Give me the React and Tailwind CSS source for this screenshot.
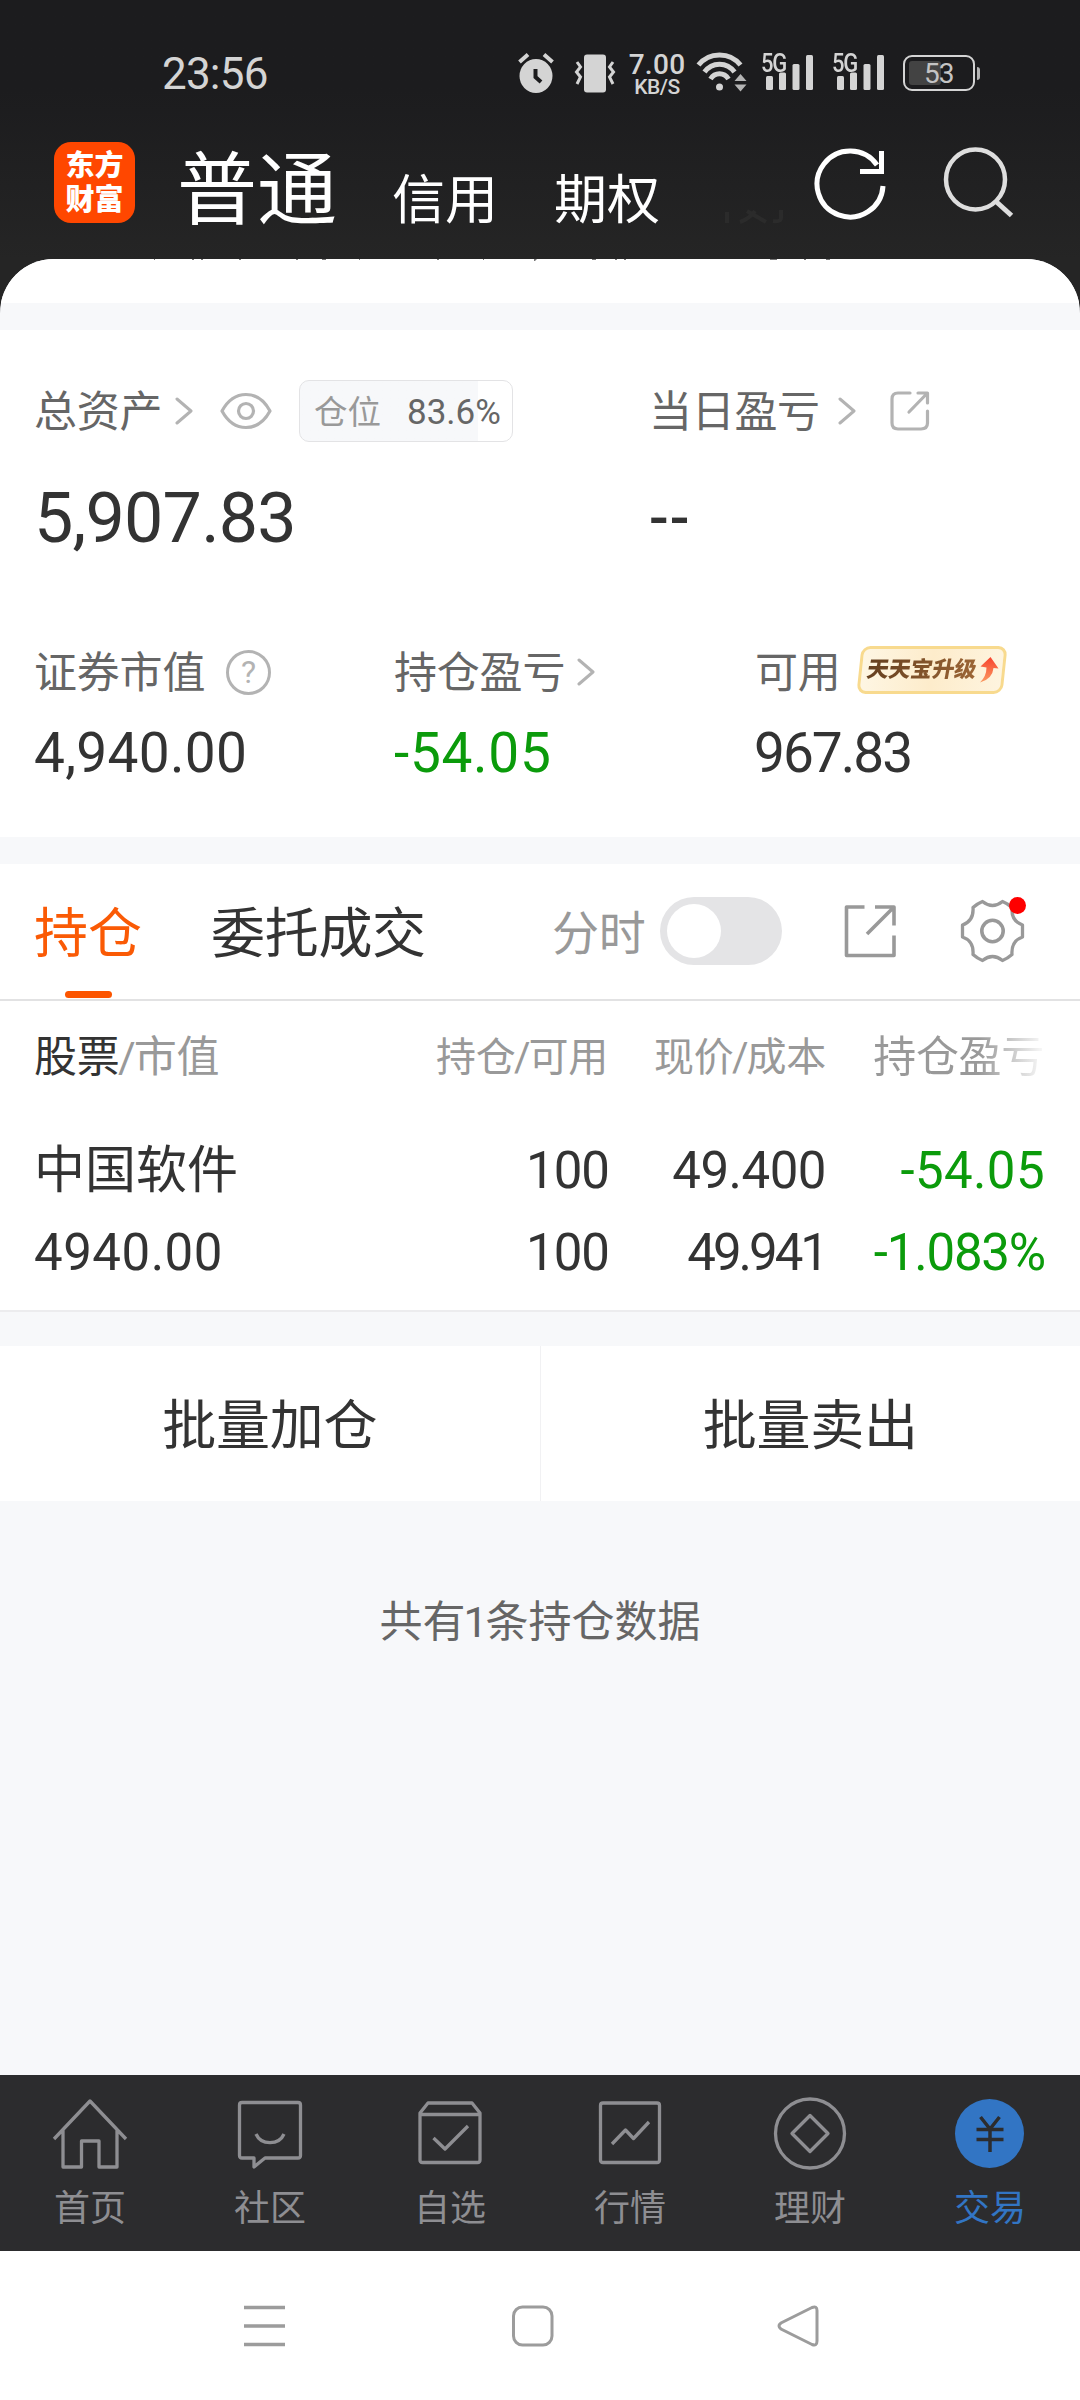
import React from "react";

const Chevron = ({ className = "" }) => (
  <svg className={`h-[28px] w-[18px] shrink-0 ${className}`} viewBox="0 0 18 28" fill="none" stroke="#b3b3b3" strokeWidth="3" strokeLinecap="round" strokeLinejoin="round">
    <path d="M2 2 L16 14 L2 26" />
  </svg>
);

const Signal = ({ className = "" }) => (
  <div className={`relative h-[40px] w-[54px] shrink-0 ${className}`}>
    <span className="absolute left-0 top-[1px] text-[25px] font-medium leading-[21px] tracking-[-1.500px] [transform:scaleX(0.88)] origin-left">5G</span>
    <svg className="absolute inset-0" width="54" height="40" viewBox="0 0 54 40" fill="#d4d4d4">
      <rect x="5" y="24" width="7" height="14" rx="1.5" />
      <rect x="18" y="20.500" width="7" height="17.500" rx="1.5" />
      <rect x="31.500" y="12" width="7" height="26" rx="1.5" />
      <rect x="45" y="3" width="7" height="35" rx="1.5" />
    </svg>
  </div>
);

function StatusBar() {
  return (
    <div className="flex h-[96px] items-start pl-[162px] pt-[52px] text-[#d4d4d4]">
      <span className="w-[109px] text-[44px] leading-[44px] tracking-[-0.8px]">23:56</span>
      <svg className="ml-[246px] shrink-0" width="38" height="42" viewBox="0 0 38 42">
        <ellipse cx="19" cy="24" rx="16.500" ry="17" fill="#d4d4d4" />
        <path d="M2.500 10 L11 2.500 M35.500 10 L27 2.500" stroke="#d4d4d4" strokeWidth="4" />
        <path d="M18.500 17 V25 L24 30" fill="none" stroke="#1c1c1e" strokeWidth="4" />
      </svg>
      <svg className="ml-[19px] shrink-0" width="42" height="42" viewBox="0 0 42 42">
        <rect x="10" y="2.500" width="22" height="38" rx="3" fill="#d4d4d4" />
        <path d="M3 10 L6.500 15 L2.500 20 L6.500 25 L3 32 M39 10 L35.500 15 L39.500 20 L35.500 25 L39 32" fill="none" stroke="#d4d4d4" strokeWidth="3" />
      </svg>
      <div className="ml-[12px] flex w-[58px] flex-col items-center font-medium">
        <span className="text-[28px] leading-[25px] tracking-[0.3px]">7.00</span>
        <span className="text-[21px] leading-[21px] tracking-[-0.500px]">KB/S</span>
      </div>
      <svg className="ml-[10px] shrink-0" width="54" height="42" viewBox="0 0 54 42" fill="none" stroke="#d4d4d4" strokeWidth="5">
        <path d="M2.500 13 C13 -0.500 34 -0.500 44.500 13" />
        <path d="M8.500 20 C16 9.500 31 9.500 38.500 20" />
        <path d="M14.500 27 C19 20 28 20 32.500 27" />
        <circle cx="23.500" cy="35" r="3.500" fill="#d4d4d4" stroke="none" />
        <path d="M44.500 22 L50.500 29 H38.500 Z M44.500 39.500 L50.500 32.500 H38.500 Z" fill="#b4b4b4" stroke="none" />
      </svg>
      <Signal className="ml-[11px]" />
      <Signal className="ml-[17px]" />
      <div className="ml-[17px] mt-[3px] flex h-[36px] w-[72px] shrink-0 items-center rounded-[9px] border-[2.500px] border-[#d4d4d4] p-[4px]">
        <div className="relative h-full w-[32px] rounded-[3px] bg-[#434343]">
          <span className="absolute left-[15px] top-[0px] text-[28px] leading-[25px] tracking-[-1px] text-[#c4c4c4]">53</span>
        </div>
      </div>
      <div className="ml-[2px] mt-[15px] h-[13px] w-[3px] rounded-r bg-[#b4b4b4]" />
    </div>
  );
}

function TitleBar() {
  return (
    <div className="flex h-[163px] pl-[54px] text-white">
      <div className="mt-[46px] flex h-[81px] w-[81px] shrink-0 flex-col items-center justify-center rounded-[17px] bg-[#ff4700] pt-[2px] text-[29px] font-black leading-[33.500px]">
        <span>东方</span>
        <span>财富</span>
      </div>
      <span className="ml-[42px] mt-[55px] w-[161px] text-[80px] leading-[80px]">普通</span>
      <span className="ml-[54px] mt-[79px] w-[106px] text-[53px] leading-[53px]">信用</span>
      <span className="ml-[56px] mt-[79px] w-[108px] text-[53px] leading-[53px]">期权</span>
      <svg className="ml-[62px] mt-[112px] shrink-0" width="60" height="18" viewBox="0 0 60 18" fill="none" stroke="#2b2b2b" strokeWidth="4">
        <path d="M3 4 V15 M16 14 Q25 11 31 3 M23 3 L42 14 M57 2 V10 Q57 14 49 13" />
      </svg>
      <svg className="ml-[29px] mt-[51px] shrink-0" width="76" height="76" viewBox="0 0 76 76" fill="none" stroke="#fff" strokeWidth="5">
        <path d="M70 39 A33 33 0 1 1 64 18" />
        <path d="M68.500 4 V24.500 H47" />
      </svg>
      <svg className="ml-[53px] mt-[50px] shrink-0" width="74" height="76" viewBox="0 0 74 76" fill="none" stroke="#dedede" strokeWidth="4.500">
        <ellipse cx="33.500" cy="33.500" rx="29.500" ry="30" />
        <path d="M54 55.500 L69.500 69.500" strokeWidth="5" />
      </svg>
    </div>
  );
}

function UpgradeBadge() {
  return (
    <div className="relative ml-[14px] mt-[-5px] h-[50px] w-[154px]">
      <div className="absolute inset-x-[4px] inset-y-[1px] -skew-x-[6deg] rounded-[9px] border-[3px] border-[#f8da8e] bg-gradient-to-r from-[#fef6e3] via-[#fdeccb] to-[#fef4df]" />
      <div className="relative flex h-full items-center pl-[12px]">
        <span className="-skew-x-[10deg] bg-gradient-to-r from-[#66401f] to-[#9c6535] bg-clip-text text-[22px] font-black leading-[30px] tracking-[-0.200px] text-transparent">天天宝升级</span>
        <svg className="ml-[3px]" width="20" height="28" viewBox="0 0 20 28">
          <defs>
            <linearGradient id="upArrow" x1="0" y1="0" x2="0" y2="1">
              <stop offset="0" stopColor="#f7432e" />
              <stop offset="1" stopColor="#fb9a62" />
            </linearGradient>
          </defs>
          <path d="M11.500 1 L19.500 12.500 L14.500 12 Q13.500 23 1 26.500 Q7.500 20 7.500 11.500 L1.500 10.500 Z" fill="url(#upArrow)" />
        </svg>
      </div>
    </div>
  );
}

function Summary() {
  return (
    <section className="h-[507px] bg-white pl-[34px] text-[#333]">
      <div className="flex h-[162px] items-center text-[43px] leading-[43px] text-[#666]">
        <div className="flex w-[615px] items-center">
          <span className="mt-[3px] w-[130px] tracking-[-0.300px]">总资产</span>
          <Chevron className="ml-[11px]" />
          <svg className="ml-[27px] shrink-0" width="52" height="38" viewBox="0 0 52 38" fill="none" stroke="#b3b3b3" strokeWidth="3.200">
            <path d="M2 19 C14 -3 38 -3 50 19 C38 41 14 41 2 19 Z" strokeLinejoin="round" />
            <circle cx="26" cy="19" r="7.500" />
          </svg>
          <div className="ml-[27px] h-[62px] w-[214px] overflow-hidden rounded-[10px] border border-[#e3e3e5] bg-gradient-to-r from-[#f7f8fa] from-[84%] to-white to-[84%]">
            <div className="flex h-full items-center pl-[14px] pt-[4px]">
              <span className="w-[66px] text-[33.500px] leading-[40px] text-[#999]">仓位</span>
              <span className="ml-[27px] text-[35px] leading-[40px]">83.6%</span>
            </div>
          </div>
        </div>
        <span className="mt-[3px] w-[172px] tracking-[-0.300px]">当日盈亏</span>
        <Chevron className="ml-[17px]" />
        <svg className="ml-[33px] shrink-0" width="42" height="42" viewBox="0 0 42 42" fill="none" stroke="#b3b3b3" strokeWidth="3.200" strokeLinecap="round" strokeLinejoin="round">
          <path d="M21 3 H9 Q3 3 3 9 V33 Q3 39 9 39 H32 Q38.500 39 38.500 33 V21" />
          <path d="M29 3 H38.500 V13 M38 3.500 L20 22" />
        </svg>
      </div>
      <div className="mt-[1px] flex h-[50px] items-center text-[70px] leading-[50px]">
        <span className="w-[615px] tracking-[-0.800px]">5,907.83</span>
        <span className="text-[58px] font-medium tracking-[1px]">--</span>
      </div>
      <div className="mt-[104px] flex h-[50px] items-center text-[43px] leading-[43px] tracking-[-0.200px] text-[#666]">
        <div className="flex w-[360px] items-center">
          <span className="mt-[2px] w-[172px]">证券市值</span>
          <div className="ml-[20px] flex h-[45px] w-[45px] items-center justify-center rounded-full border-[3px] border-[#b3b3b3] text-[32px] leading-[32px] text-[#b3b3b3]">?</div>
        </div>
        <div className="flex w-[361px] items-center">
          <span className="mt-[2px] w-[172px]">持仓盈亏</span>
          <Chevron className="ml-[11px]" />
        </div>
        <span className="mt-[2px] w-[86px]">可用</span>
        <UpgradeBadge />
      </div>
      <div className="mt-[30px] flex h-[52px] items-center text-[55px] leading-[52px]">
        <span className="w-[360px] tracking-[0.300px]">4,940.00</span>
        <span className="w-[360px] tracking-[0.700px] text-[#0b9b0b]">-54.05</span>
        <span className="tracking-[0px]"><span className="tracking-[-2px]">967.8</span>3</span>
      </div>
    </section>
  );
}

function Tabs() {
  return (
    <div className="flex h-[137px] items-center border-b-2 border-[#e2e2e3] pl-[34px] text-[54px] leading-[54px] text-[#333]">
      <div className="relative mt-[7px] w-[109px] text-[#fa5a05]">
        持仓
        <span className="absolute left-[31px] top-[83px] h-[7px] w-[47px] rounded-full bg-[#fc5500]" />
      </div>
      <span className="ml-[68px] mt-[7px] w-[216px] tracking-[-0.300px]">委托成交</span>
      <span className="ml-[125px] mt-[4px] w-[94px] text-[47px] leading-[47px] tracking-[-0.300px] text-[#999]">分时</span>
      <div className="ml-[14px] mt-[-1px] flex h-[68px] w-[122px] items-center rounded-full bg-[#e4e4e6] pl-[7px]">
        <div className="h-[54px] w-[54px] rounded-full bg-white" />
      </div>
      <svg className="ml-[61px] mt-[-2px] shrink-0" width="54" height="54" viewBox="0 0 54 54" fill="none" stroke="#999" strokeWidth="3.600" strokeLinejoin="round">
        <path d="M21.500 3 H3.500 V51.500 H51 V31.500" />
        <path d="M32 3 H51 V21.500 M50 4 L24 30" />
      </svg>
      <div className="relative ml-[63px] mt-[-2px] h-[64px] w-[66px]">
        <svg width="66" height="64" viewBox="0 0 66 64" fill="none" stroke="#999" strokeWidth="3.300" strokeLinejoin="round">
          <path d="M22.500 2.500 Q32.500 10.500 42.500 2.500 Q47.500 4.500 52 8.500 Q51 22 62.500 26 V38 Q51 42 52 55.500 Q47.500 59.500 42.500 61.500 Q32.500 53.500 22.500 61.500 Q17.500 59.500 13 55.500 Q14 42 2.500 38 V26 Q14 22 13 8.500 Q17.500 4.500 22.500 2.500 Z" />
          <circle cx="32.500" cy="32" r="10.700" strokeWidth="3.600" />
        </svg>
        <span className="absolute right-0 top-[-2px] h-[17px] w-[17px] rounded-full bg-[#fe0000]" />
      </div>
    </div>
  );
}

const Slash = () => <span className="mx-[-1.500px]">/</span>;

const rows = [
  [["中国软件", ""], ["100", "tracking-[-1px]"], ["49.400", "tracking-[-0.500px]"], ["-54.05", "tracking-[0.400px]"]],
  [["4940.00", "tracking-[0.500px]"], ["100", "tracking-[-1px]"], ["49.941", "tracking-[-3px]"], ["-1.083%", "tracking-[-1.200px]"]],
];

function Holdings() {
  return (
    <section className="h-[448px] border-b-2 border-[#ececee] bg-white text-[#333]">
      <Tabs />
      <div className="flex h-[113px] items-center pl-[34px] text-[40px] leading-[45px] text-[#999]">
        <span className="w-[274px] text-[43px] tracking-[-0.300px]"><span className="text-[#333]">股票</span><Slash />市值</span>
        <span className="w-[300px] text-right tracking-[-0.300px]">持仓<Slash />可用</span>
        <span className="w-[218px] text-right tracking-[-0.300px]">现价<Slash />成本</span>
        <span className="w-[218px] bg-gradient-to-r from-[#999] from-[70%] to-[#f4f4f4] to-[98%] bg-clip-text text-right text-[43px] tracking-[-0.300px] text-transparent">持仓盈亏</span>
      </div>
      <div className="pt-[7px]">
        {rows.map(([name, qty, price, profit]) => (
          <div key={name[0]} className="mt-[17px] flex h-[65px] items-center pl-[34px] text-[51px] leading-[65px]">
            <span className={`w-[274px] ${name[1]}`}>{name[0]}</span>
            <span className={`w-[301px] text-right ${qty[1]}`}>{qty[0]}</span>
            <span className={`w-[217px] text-right ${price[1]}`}>{price[0]}</span>
            <span className={`w-[219px] text-right text-[#0b9b0b] ${profit[1]}`}>{profit[0]}</span>
          </div>
        ))}
      </div>
    </section>
  );
}

const tabs = [
  { label: "首页", icon: <path d="M2 45 L38 7 L74 45 M11 36 V73 H29.500 V47 H47 V73 H65 V36" /> },
  { label: "社区", icon: <path d="M10 8.500 H66 Q68.500 8.500 68.500 11 V61.500 Q68.500 64 66 64 H33 L22 73 V64 H10 Q7.500 64 7.500 61.500 V11 Q7.500 8.500 10 8.500 Z M24 40 C29 51.500 47 51.500 52 40" /> },
  { label: "自选", icon: <path d="M16 9 H60 L68 19 V66 Q68 68.500 65.500 68.500 H10.500 Q8 68.500 8 66 V19 Z M8 20.500 H68 M21.500 44 L33 55 L56 32" /> },
  { label: "行情", icon: <path d="M11 9 H65 Q67.500 9 67.500 11.500 V66 Q67.500 68.500 65 68.500 H11 Q8.500 68.500 8.500 66 V11.500 Q8.500 9 11 9 Z M20 50 L33.500 36 L41.500 44.500 L57 28" /> },
  { label: "理财", icon: <><ellipse cx="38" cy="39.500" rx="34.500" ry="34.500" /><path d="M38 21.500 L56 39.500 L38 57.500 L20 39.500 Z" /></> },
];

function BottomNav() {
  return (
    <nav className="grid h-[176px] grid-cols-6 bg-[#2c2c2e] pt-[19px] text-[36px] leading-[36px] text-[#8e8e92]">
      {tabs.map((t) => (
        <div key={t.label} className="flex flex-col items-center">
          <svg width="76" height="80" viewBox="0 0 76 80" fill="none" stroke="#8e8e92" strokeWidth="3.300" strokeLinejoin="round">{t.icon}</svg>
          <span className="mt-[17px]">{t.label}</span>
        </div>
      ))}
      <div className="flex flex-col items-center text-[#3275c4]">
        <svg width="76" height="80" viewBox="0 0 76 80" fill="none" stroke="#2c2c2e" strokeWidth="3.500">
          <circle cx="37.500" cy="39.500" r="34.500" fill="#3275c4" stroke="none" />
          <path d="M28.500 23 L38 35 L47.500 23 M38 35 V58 M24.500 35.500 H51.500 M24.500 45.500 H51.500" />
        </svg>
        <span className="mt-[17px]">交易</span>
      </div>
    </nav>
  );
}

export default function App() {
  return (
    <div className="flex h-[2400px] w-[1080px] flex-col overflow-hidden whitespace-nowrap bg-[#f7f8fa] font-[Roboto,'Noto_Sans_CJK_SC',sans-serif]">
      <header className="h-[259px] shrink-0 bg-gradient-to-b from-[#1c1c1e] from-[35%] to-[#252525]">
        <StatusBar />
        <TitleBar />
      </header>
      <div className="h-[71px] shrink-0 bg-[#252525]">
        <div className="h-full overflow-hidden rounded-t-[54px] bg-[#f7f8fa]">
          <div className="h-[44px] bg-white">
            <svg className="block" width="1080" height="4" viewBox="0 0 1080 4" fill="#777">
              <path d="M154 0h1v1h-1z M192 0h2v1h-2z M201 0h2v1h-2z M239 0h2v1h-2z M296 0h2v1h-2z M322 0h4v1h-4z M359 0h1v1h-1z M437 0h2v1h-2z M483 0h1v1h-1z M534 0h3l-2 2h-1z M592 0h4v1h-4z M615 0h2v1h-2z M624 0h2v1h-2z M770 0h7v1h-7z M804 0h2v1h-2z M826 0h4v1h-4z" />
            </svg>
          </div>
        </div>
      </div>
      <Summary />
      <div className="mt-[27px]">
        <Holdings />
      </div>
      <div className="mt-[34px] flex h-[155px] items-center bg-white text-center text-[54px] leading-[54px] tracking-[-0.300px] text-[#333]">
        <span className="flex-1 pt-[7px]">批量加仓</span>
        <div className="h-full w-px bg-[#f1f1f3]" />
        <span className="flex-1 pt-[7px]">批量卖出</span>
      </div>
      <div className="flex-1 pt-[100px] text-center text-[43px] leading-[43px] text-[#666]">共有<span className="mx-[-2px]">1</span>条持仓数据</div>
      <BottomNav />
      <div className="flex h-[149px] items-center bg-white pl-[243px]">
        <svg width="43" height="44" viewBox="0 0 43 44" stroke="#9c9c9c" strokeWidth="3.500"><path d="M1 3.500 H42 M1 22 H42 M1 40.500 H42" /></svg>
        <svg className="ml-[225px]" width="43" height="44" viewBox="0 0 43 44" fill="none" stroke="#9c9c9c" strokeWidth="3"><rect x="2.500" y="3" width="38.500" height="38" rx="9" /></svg>
        <svg className="ml-[222px]" width="44" height="44" viewBox="0 0 44 44" fill="none" stroke="#9c9c9c" strokeWidth="3"><path d="M36 3.500 Q41 1.500 41 6.500 V37 Q41 42.500 36 40.500 L5 25 Q1 22 5 19 Z" /></svg>
      </div>
    </div>
  );
}
